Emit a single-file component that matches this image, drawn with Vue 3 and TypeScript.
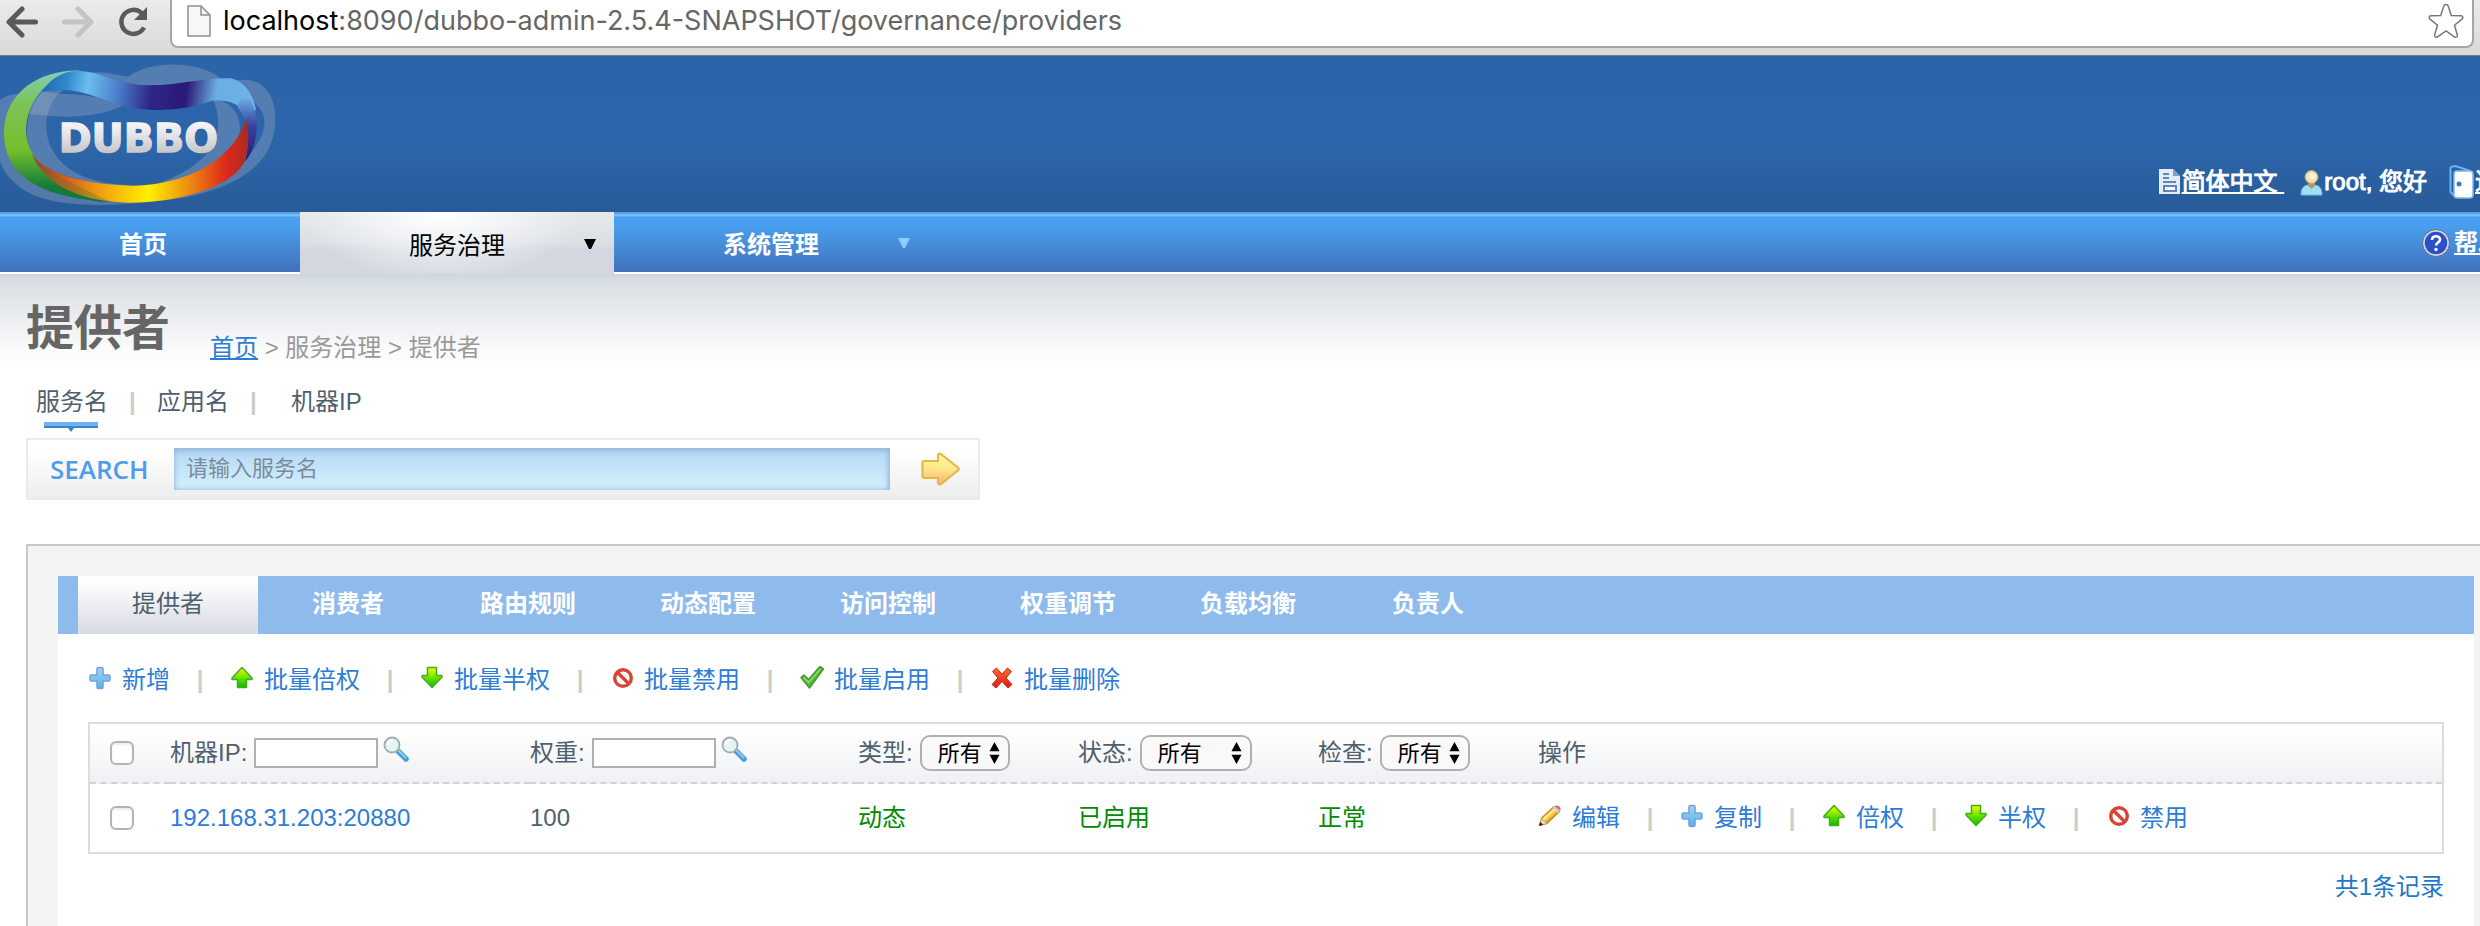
<script setup lang="ts">
import { ref } from 'vue'

interface Action {
  icon: string
  label: string
}

interface Provider {
  address: string
  weight: number
  type: string
  status: string
  check: string
}

const searchTabs = ['服务名', '应用名', '机器IP']
const tabs = ['提供者', '消费者', '路由规则', '动态配置', '访问控制', '权重调节', '负载均衡', '负责人']

const batchActions: Action[] = [
  { icon: 'plus', label: '新增' },
  { icon: 'up', label: '批量倍权' },
  { icon: 'down', label: '批量半权' },
  { icon: 'ban', label: '批量禁用' },
  { icon: 'tick', label: '批量启用' },
  { icon: 'cross', label: '批量删除' },
]

const rowActions: Action[] = [
  { icon: 'pencil', label: '编辑' },
  { icon: 'plus', label: '复制' },
  { icon: 'up', label: '倍权' },
  { icon: 'down', label: '半权' },
  { icon: 'ban', label: '禁用' },
]

const filters = [
  { id: 'type', label: '类型:', options: ['所有', '动态', '静态'] },
  { id: 'status', label: '状态:', options: ['所有', '已启用', '已禁用'] },
  { id: 'check', label: '检查:', options: ['所有', '正常'] },
]

const providers: Provider[] = [
  { address: '192.168.31.203:20880', weight: 100, type: '动态', status: '已启用', check: '正常' },
]

const keyword = ref('')
const ipFilter = ref('')
const weightFilter = ref('')
</script>

<template>
  <div class="page">
    <svg class="sprite" width="0" height="0" aria-hidden="true">
      <defs>
        <linearGradient id="g-green" x1="0" y1="0" x2="0" y2="1">
          <stop offset="0" stop-color="#f2ff00" />
          <stop offset="0.55" stop-color="#5fe000" />
          <stop offset="1" stop-color="#12b800" />
        </linearGradient>
        <linearGradient id="g-plus" x1="0" y1="0" x2="0" y2="1">
          <stop offset="0" stop-color="#9fd6f6" />
          <stop offset="1" stop-color="#4fb4ee" />
        </linearGradient>
        <linearGradient id="g-red" x1="0" y1="0" x2="0" y2="1">
          <stop offset="0" stop-color="#ff6a3a" />
          <stop offset="1" stop-color="#d91c0c" />
        </linearGradient>
        <linearGradient id="g-arrow" x1="0" y1="0" x2="0" y2="1">
          <stop offset="0" stop-color="#ffff9c" />
          <stop offset="0.5" stop-color="#ffe68a" />
          <stop offset="1" stop-color="#ffae6e" />
        </linearGradient>
      </defs>
      <symbol id="i-plus" viewBox="0 0 24 28">
        <path d="M10.500 1.500h3a1.500 1.500 0 0 1 1.500 1.500v6h5.500a1.500 1.500 0 0 1 1.500 1.500v3a1.500 1.500 0 0 1-1.500 1.500h-5.500v6a1.500 1.500 0 0 1-1.500 1.500h-3a1.500 1.500 0 0 1-1.500-1.500v-6H3.500a1.500 1.500 0 0 1-1.500-1.500v-3A1.500 1.500 0 0 1 3.500 9h5.500V3A1.500 1.500 0 0 1 10.500 1.500z" fill="url(#g-plus)" stroke="#7d9fd6" stroke-width="1.600" />
      </symbol>
      <symbol id="i-up" viewBox="0 0 24 28">
        <path d="M12 1.500L22 12v1.500h-5.500v8h-9v-8H2V12z" fill="url(#g-green)" stroke="#3fae1c" stroke-width="1.500" stroke-linejoin="round" />
      </symbol>
      <symbol id="i-down" viewBox="0 0 24 28">
        <path d="M12 21.500L22 11V9.500h-5.500v-8h-9v8H2V11z" fill="url(#g-green)" stroke="#3fae1c" stroke-width="1.500" stroke-linejoin="round" />
      </symbol>
      <symbol id="i-ban" viewBox="0 0 24 28">
        <circle cx="13" cy="12" r="8.300" fill="#fff" stroke="#d64535" stroke-width="3.400" />
        <path d="M7.500 6.500l11 11" stroke="#d64535" stroke-width="3.400" />
      </symbol>
      <symbol id="i-tick" viewBox="0 0 24 28">
        <path d="M1 11.500l3-2.500 4.500 4.500L20 .5l3.500 2.500L9.500 22z" fill="#5cb83c" stroke="#3f9a2a" stroke-width="1.500" stroke-linejoin="round" />
        <path d="M3.500 11.500l5 5L20.500 3" fill="none" stroke="#8fdc6a" stroke-width="1.500" />
      </symbol>
      <symbol id="i-cross" viewBox="0 0 24 28">
        <path d="M6.500 2L12 8l5.500-6L21.500 5.500 16 12l6 6.500-4 3.500-6-6.500L6 22l-4-3.500L8 12 2.500 5.500z" fill="url(#g-red)" stroke="#c4281a" stroke-width="1" stroke-linejoin="round" />
      </symbol>
      <symbol id="i-pencil" viewBox="0 0 24 28">
        <path d="M1.500 21.500L3.500 14 16 2.500l5.500 5L9 19.500z" fill="#f5c842" stroke="#b98a1e" stroke-width="1.200" />
        <path d="M5.500 15.500L17 5" stroke="#ffeb9a" stroke-width="2" />
        <path d="M8 18.500l11.500-10" stroke="#d99e1c" stroke-width="1.500" />
        <path d="M1.500 21.500l2-7 5.500 5z" fill="#f6d5b4" stroke="#c99a6a" stroke-width="0.800" />
        <path d="M1 22l1.200-4 3 2.800z" fill="#222" />
        <path d="M14.500 4L17 1.800l5 4.800-2.200 2.300z" fill="#c9d3d8" />
        <path d="M16.500 2.300C18.500.2 24 2.500 22.300 6.800z" fill="#e5646a" />
      </symbol>
      <symbol id="i-magnifier" viewBox="0 0 26 26">
        <path d="M15.500 15.500l7.500 7.500" stroke="#4e9ed8" stroke-width="5.500" stroke-linecap="round" />
        <path d="M15.500 14.500l7 7" stroke="#8cccf4" stroke-width="2" stroke-linecap="round" />
        <circle cx="9" cy="9" r="7.500" fill="#e4f3f3" stroke="#a4adad" stroke-width="1.800" />
        <path d="M4.500 9a4.500 4.500 0 0 1 5-4.500" fill="none" stroke="#fff" stroke-width="2" />
      </symbol>
      <symbol id="i-updown" viewBox="0 0 12 24">
        <path d="M6 0l5.500 10H.5zM6 24l5.500-10H.5z" fill="#000" />
      </symbol>
    </svg>

    <div class="browser">
      <div class="browser-buttons">
        <button type="button" aria-label="后退">
          <svg width="32" height="32" viewBox="0 0 32 32"><path d="M29.500 16H4M16 3L3 16l13 13" fill="none" stroke="#5a5a5a" stroke-width="5" stroke-linecap="round" stroke-linejoin="round" /></svg>
        </button>
        <button type="button" aria-label="前进">
          <svg width="32" height="32" viewBox="0 0 32 32"><path d="M2.500 16H28M16 3l13 13-13 13" fill="none" stroke="#c4c4c4" stroke-width="5" stroke-linecap="round" stroke-linejoin="round" /></svg>
        </button>
        <button type="button" aria-label="刷新">
          <svg width="32" height="32" viewBox="0 0 32 32"><path d="M26 21.500A12 12 0 1 1 24 7.500" fill="none" stroke="#5a5a5a" stroke-width="4.500" /><path d="M29 1v13H16z" fill="#5a5a5a" /></svg>
        </button>
      </div>
      <div class="address">
        <svg width="24" height="32" viewBox="0 0 24 32"><path d="M1 1h13l9 9v21H1z" fill="#f8f8f8" stroke="#8f8f8f" stroke-width="1.500" /><path d="M14 1v9h9" fill="none" stroke="#8f8f8f" stroke-width="1.500" /></svg>
        <span class="url"><span class="host">localhost</span>:8090/dubbo-admin-2.5.4-SNAPSHOT/governance/providers</span>
        <svg class="star" width="36" height="36" viewBox="0 0 36 36"><path d="M18 1.500c1 0 2 .8 2.300 1.800l3 9.200 9.700.2c2 .2 2.500 2.300 1 3.500l-7.500 6 2.800 9.600c.5 2-1.300 3.200-2.900 2L18 28l-8.400 5.800c-1.600 1.200-3.400 0-2.900-2l2.800-9.600-7.500-6c-1.500-1.200-1-3.300 1-3.500l9.700-.2 3-9.200C16 2.300 17 1.500 18 1.500z" fill="#fff" stroke="#777" stroke-width="1.500" /></svg>
      </div>
    </div>

    <header class="banner">
      <svg class="logo" width="290" height="156" viewBox="0 18 870 468" role="img" aria-label="DUBBO">
        <defs>
          <linearGradient id="l-green" x1="0" y1="0" x2="0" y2="1">
            <stop offset="0" stop-color="#7fd0b8" />
            <stop offset="0.25" stop-color="#7cc357" />
            <stop offset="0.6" stop-color="#76bf2c" />
            <stop offset="0.88" stop-color="#177c38" />
            <stop offset="1" stop-color="#12763a" />
          </linearGradient>
          <linearGradient id="l-blue" gradientUnits="userSpaceOnUse" x1="125" y1="80" x2="760" y2="170">
            <stop offset="0" stop-color="#1a68ae" />
            <stop offset="0.12" stop-color="#2f8acb" />
            <stop offset="0.22" stop-color="#6cbdf0" />
            <stop offset="0.36" stop-color="#4a7fcc" />
            <stop offset="0.52" stop-color="#2f2585" />
            <stop offset="0.68" stop-color="#2b1976" />
            <stop offset="0.82" stop-color="#6aaee3" />
            <stop offset="1" stop-color="#6db3e8" />
          </linearGradient>
          <linearGradient id="l-tail" gradientUnits="userSpaceOnUse" x1="0" y1="140" x2="0" y2="330">
            <stop offset="0" stop-color="#6db3e8" />
            <stop offset="0.45" stop-color="#3a449c" />
            <stop offset="1" stop-color="#2a1a78" />
          </linearGradient>
          <linearGradient id="l-fire" gradientUnits="userSpaceOnUse" x1="95" y1="0" x2="745" y2="0">
            <stop offset="0" stop-color="#b9361f" />
            <stop offset="0.18" stop-color="#dd661a" />
            <stop offset="0.32" stop-color="#f1a010" />
            <stop offset="0.54" stop-color="#fff000" />
            <stop offset="0.72" stop-color="#ec8f12" />
            <stop offset="0.9" stop-color="#dc281c" />
            <stop offset="1" stop-color="#a92c22" />
          </linearGradient>
          <linearGradient id="l-text" x1="0" y1="0" x2="0" y2="1">
            <stop offset="0" stop-color="#ffffff" />
            <stop offset="0.4" stop-color="#e8e8ea" />
            <stop offset="1" stop-color="#b9b9bc" />
          </linearGradient>
        </defs>
        <g fill="#b4b9c4" fill-opacity="0.3">
          <path d="M385 80C450 30 600 30 665 88L690 100C600 85 540 108 440 106C380 103 330 85 270 68C320 62 350 78 385 80z" />
          <path d="M0 150C25 128 70 130 130 122C170 140 260 120 370 166C280 212 150 202 85 190C70 240 75 290 98 320C110 380 190 440 300 455C520 460 680 420 745 320C800 250 810 200 765 160L705 92C790 75 830 140 826 215C820 330 740 400 560 442C380 470 180 480 80 425C30 395 10 360 0 335z" />
          <path d="M130 122L190 120C120 170 120 290 200 350C250 390 330 405 400 405C270 410 140 370 98 318C70 260 75 180 130 122z" />
          <path d="M640 150C690 150 722 190 720 240C715 310 600 385 470 402C560 370 700 300 640 150z" />
        </g>
        <path d="M240 62C130 58 12 120 12 250C12 370 110 445 330 455C190 420 78 340 78 240C80 170 120 85 240 62z" fill="url(#l-green)" />
        <path d="M125 128C150 82 195 62 235 62C310 66 350 104 440 106C530 108 610 82 690 85C730 92 760 130 768 180L735 190C720 160 680 148 637 152C580 172 520 180 460 180C340 176 275 120 190 120C160 120 140 122 125 128z" fill="url(#l-blue)" />
        <path d="M730 122C765 160 772 200 770 235C768 280 755 310 736 334C750 270 742 210 712 170z" fill="url(#l-tail)" />
        <path d="M95 310C130 370 250 405 400 407C560 405 705 325 738 206C750 260 745 310 730 342C680 420 520 458 390 458C230 455 130 400 95 310z" fill="url(#l-fire)" />
        <path d="M95 310C120 360 200 390 330 455C230 452 130 400 95 310z" fill="#2d7a35" fill-opacity="0.3" />
        <text x="176" y="305" font-family="DejaVu Sans" font-weight="700" font-size="119" fill="url(#l-text)" stroke="url(#l-text)" stroke-width="4">DUBBO</text>
      </svg>
      <div class="user-links">
        <a href="#" class="lang"><svg width="24" height="28" viewBox="0 0 24 28"><path d="M1 1h14l7 7v18H1z" fill="#e4ecf8" /><path d="M15 1v7h7z" fill="#7f9fd4" /><path d="M5 6h6M5 10h6M5 14h13" stroke="#5c87b8" stroke-width="2" /><path d="M6 18h12v5H6z" fill="#fff" stroke="#5c87b8" stroke-width="2" /></svg><span>简体中文&nbsp;</span></a>
        <span class="user"><svg width="24" height="28" viewBox="0 0 24 28"><path d="M1 27c0-7 3-10 8-10h5c5 0 8 3 8 10z" fill="#9fe0f7" stroke="#6fb8e4" /><path d="M8 13h7v5l-3.500 3L8 18z" fill="#b99866" /><circle cx="11.500" cy="9" r="6.500" fill="#f3e2b0" stroke="#b79f70" /><circle cx="12.500" cy="8" r="3" fill="#fff6d8" /></svg>root, 您好</span>
        <a href="#" class="logout"><svg width="26" height="36" viewBox="0 0 26 36"><path d="M1.500 3l5-1 15 5v4M1.500 3v25l4 4" fill="none" stroke="#6fb1f2" stroke-width="2" /><rect x="5" y="7" width="19" height="27" rx="3" fill="#fff" stroke="#7fb8f0" stroke-width="1.500" /><circle cx="10" cy="20" r="2.500" fill="#3f78b8" /></svg><span>退出</span></a>
      </div>
    </header>

    <nav class="menu" aria-label="主菜单">
      <a href="#" class="menu-home">首页</a>
      <a href="#" class="menu-item current">服务治理<svg width="12" height="10" viewBox="0 0 12 10"><path d="M0 0h12L7 10H5z" fill="#000" /></svg></a>
      <a href="#" class="menu-item">系统管理<svg width="12" height="10" viewBox="0 0 12 10"><path d="M0 0h12L7 10H5z" fill="#8fcbff" /></svg></a>
      <a href="#" class="help"><svg width="28" height="28" viewBox="0 0 28 28"><circle cx="14" cy="14" r="12.300" fill="#2b4fc6" stroke="#d5d8e0" stroke-width="2.200" /><circle cx="14" cy="14" r="13.500" fill="none" stroke="#5f6f8c" /><path d="M10 11c0-5 8-5 8-.5 0 3-4 3-4 6" fill="none" stroke="#fff" stroke-width="2.600" /><circle cx="14" cy="20.500" r="1.700" fill="#fff" /></svg><span>帮助</span></a>
    </nav>

    <main>
      <div class="heading">
        <h1>提供者</h1>
        <p class="crumbs"><a href="#">首页</a> &gt; 服务治理 &gt; 提供者</p>
      </div>

      <div class="search-tabs">
        <a v-for="(tab, i) in searchTabs" :key="tab" href="#" :class="{ on: i === 0 }">{{ tab }}<svg v-if="i === 0" width="54" height="10" viewBox="0 0 54 10"><path d="M0 0h54v4H0z" fill="#6db4f4" /><path d="M0 4h54v2H30l-3 4-3-4H0z" fill="#3f83c0" /></svg></a>
      </div>

      <form class="search" @submit.prevent>
        <label for="keyword">SEARCH</label>
        <input id="keyword" v-model="keyword" type="text" placeholder="请输入服务名">
        <button type="submit" aria-label="搜索">
          <svg width="40" height="34" viewBox="0 0 40 34"><path d="M3 9h14V3.500c0-2 1.500-2.500 3-1.300L37 15.500c1 .8 1 2.200 0 3L20 32c-1.500 1-3 .5-3-1.500V26H3c-1 0-1.500-.5-1.500-1.500v-14C1.500 9.500 2 9 3 9z" fill="url(#g-arrow)" stroke="#e3b94c" stroke-width="2.200" /></svg>
        </button>
      </form>

      <section class="panel">
        <nav class="tabs" aria-label="服务治理">
          <a v-for="(tab, i) in tabs" :key="tab" href="#" :class="{ on: i === 0 }">{{ tab }}</a>
        </nav>
        <div class="content">
          <div class="actions toolbar">
            <template v-for="(a, i) in batchActions" :key="a.label">
              <span v-if="i" class="bar">|</span>
              <a href="#"><svg width="24" height="28"><use :href="'#i-' + a.icon" /></svg>{{ a.label }}</a>
            </template>
          </div>

          <table>
            <colgroup>
              <col class="c-box"><col class="c-ip"><col class="c-weight"><col class="c-type"><col class="c-status"><col class="c-check"><col>
            </colgroup>
            <thead>
              <tr>
                <th><input type="checkbox" aria-label="全选"></th>
                <th>
                  <div class="filter">
                    <label for="ip">机器IP:</label>
                    <input id="ip" v-model="ipFilter" type="text">
                    <button type="button" aria-label="按机器IP查找"><svg width="26" height="26"><use href="#i-magnifier" /></svg></button>
                  </div>
                </th>
                <th>
                  <div class="filter">
                    <label for="weight">权重:</label>
                    <input id="weight" v-model="weightFilter" type="text">
                    <button type="button" aria-label="按权重查找"><svg width="26" height="26"><use href="#i-magnifier" /></svg></button>
                  </div>
                </th>
                <th v-for="f in filters" :key="f.id">
                  <div class="filter">
                    <label :for="f.id">{{ f.label }}</label>
                    <span class="picker" :class="f.id">
                      <select :id="f.id"><option v-for="o in f.options" :key="o">{{ o }}</option></select>
                      <svg width="11" height="24"><use href="#i-updown" /></svg>
                    </span>
                  </div>
                </th>
                <th>操作</th>
              </tr>
            </thead>
            <tbody>
              <tr v-for="p in providers" :key="p.address">
                <td><input type="checkbox" :aria-label="p.address"></td>
                <td><a href="#">{{ p.address }}</a></td>
                <td>{{ p.weight }}</td>
                <td class="ok">{{ p.type }}</td>
                <td class="ok">{{ p.status }}</td>
                <td class="ok">{{ p.check }}</td>
                <td>
                  <div class="actions">
                    <template v-for="(a, i) in rowActions" :key="a.label">
                      <span v-if="i" class="bar">|</span>
                      <a href="#"><svg width="24" height="28"><use :href="'#i-' + a.icon" /></svg>{{ a.label }}</a>
                    </template>
                  </div>
                </td>
              </tr>
            </tbody>
          </table>
          <p class="total">共{{ providers.length }}条记录</p>
        </div>
      </section>
    </main>
  </div>
</template>

<style>
body {
  margin: 0;
}
</style>

<style scoped>
.page {
  display: flex;
  flex-direction: column;
  min-height: 100vh;
  overflow: hidden;
  background: #fff;
  color: #4f5f6f;
  font-family: "Liberation Sans", "Noto Sans CJK SC", sans-serif;
  font-size: 24px;
  line-height: 36px;
}

.page *,
.page {
  box-sizing: border-box;
}

.sprite {
  position: absolute;
}

a {
  color: #2d7cd6;
  text-decoration: none;
}

button {
  display: flex;
  padding: 0;
  border: 0;
  background: none;
}

svg {
  flex: none;
}

.browser {
  display: flex;
  height: 56px;
  padding-right: 6px;
  border-bottom: 1px solid #7a7a7a;
  background: linear-gradient(#ebebeb, #d9d9d9);
}

.browser-buttons {
  display: flex;
  gap: 24px;
  width: 170px;
  height: 44px;
  padding-left: 6px;
  align-items: center;
}

.address {
  display: flex;
  flex: 1;
  align-items: center;
  height: 48px;
  padding: 0 8px 4px 15px;
  border: 2px solid #a6a6a6;
  border-top: 0;
  border-radius: 0 0 8px 8px;
  background: #fff;
}

.url {
  flex: 1;
  margin-left: 12px;
  color: #666;
  font-family: Inter, Roboto, sans-serif;
  font-size: 27px;
}

.host {
  color: #000;
}

.banner {
  display: flex;
  align-items: flex-end;
  justify-content: space-between;
  background: linear-gradient(#2c64a9 0%, #2c65a9 60%, #285a98 100%);
}

.logo {
  display: block;
}

.user-links {
  display: flex;
  margin: 0 -43px 10px 0;
  color: #fff;
  -webkit-text-stroke: 1px #fff;
}

.user-links a,
.user-links .user {
  display: flex;
  align-items: center;
  height: 40px;
  color: #fff;
}

.user-links a span,
.help span {
  text-decoration: underline;
}

.lang {
  margin-right: 16px;
}

.user {
  margin-right: 22px;
}

.menu {
  display: flex;
  height: 62px;
  border-bottom: 2px solid #fff;
  background: linear-gradient(#4fa2f0 0, #4fa2f0 2px, #7dbbf6 2px, #7dbbf6 4px, #4aa1f1 5px, #489cec 16px, #4272ba 100%);
}

.menu a {
  display: flex;
  align-items: center;
  color: #fff;
  font-weight: 700;
}

.menu-home {
  width: 300px;
  padding: 6px 0 0 119px;
}

.menu-item {
  width: 314px;
  padding: 6px 18px 0 109px;
  justify-content: space-between;
}

.menu-item svg {
  margin-bottom: 4px;
}

.menu .current {
  height: 62px;
  background: radial-gradient(ellipse 140px 70px at 45% 0, #fff, rgba(255, 255, 255, 0)), linear-gradient(#e6e9ec, #dbe0e5 50%, #d3d8e0 60%, #d3d8e0);
  color: #000;
  font-weight: 400;
}

.menu .help {
  gap: 4px;
  margin: 2px -22px 0 auto;
}

main {
  display: flex;
  flex: 1;
  flex-direction: column;
  padding-left: 26px;
  background: linear-gradient(#cfd5de 0, #dbe0e5 10px, #e4e7eb 30px, #eef0f3 50px, #fafbfb 76px, #fff 94px);
}

.heading {
  display: flex;
  gap: 40px;
  margin-top: 25px;
}

h1 {
  margin: 0;
  color: #666;
  font-size: 48px;
  font-weight: 700;
  line-height: 60px;
}

.crumbs {
  margin: 31px 0 0;
  color: #999;
}

.crumbs a {
  text-decoration: underline;
}

.search-tabs {
  display: flex;
  height: 54px;
  margin-top: 18px;
  padding-left: 10px;
}

.search-tabs a {
  display: flex;
  flex-direction: column;
  height: 36px;
  color: #4f5f6f;
}

.search-tabs a + a {
  display: flex;
  flex-direction: row;
}

.search-tabs a + a::before {
  content: "|";
  width: 7px;
  margin: 0 21px;
  color: #ccc;
  font-weight: 700;
}

.search-tabs a:last-child::before {
  margin-right: 34px;
}

.search-tabs svg {
  display: block;
  margin: 2px 0 0 8px;
}

.search {
  display: flex;
  align-items: center;
  width: 954px;
  height: 62px;
  border: 2px solid #e8ecf0;
  background: linear-gradient(#fff 20%, #ededed);
}

.search label {
  width: 146px;
  padding-left: 22px;
  color: #4f9cec;
  font-family: "Open Sans", sans-serif;
  font-size: 26px;
  font-weight: 600;
}

.search input {
  width: 716px;
  height: 42px;
  padding: 0 12px;
  border: 0;
  background: linear-gradient(#b4d8f5, #cdecfc 80%);
  box-shadow: inset 0 2px 6px #8fb4dc, inset -2px 0 4px #a9c8dc;
  color: #4f5f6f;
  font: 22px "Liberation Sans", "Noto Sans CJK SC", sans-serif;
}

.search input::placeholder {
  color: #7d8b99;
}

.search button {
  margin-left: 31px;
}

.panel {
  display: flex;
  flex: 1;
  flex-direction: column;
  margin-top: 44px;
  padding: 30px 6px 0 30px;
  border: 2px solid #c8c8c8;
  border-width: 2px 0 0 2px;
  background: #f3f5f4;
}

.tabs {
  display: flex;
  height: 58px;
  padding-left: 20px;
  background: #8ebbec;
}

.tabs a {
  width: 180px;
  color: #fff;
  font-weight: 700;
  line-height: 56px;
  text-align: center;
}

.tabs .on {
  background: linear-gradient(#fff 10%, #d5d9e1);
  color: #4f5f6f;
  font-weight: 400;
}

.content {
  flex: 1;
  padding: 0 30px;
  background: #fff;
}

.actions {
  display: flex;
  align-items: center;
}

.actions a {
  display: flex;
  align-items: center;
  gap: 10px;
}

.bar {
  width: 8px;
  margin: 0 26px;
  color: #ccc;
  font-weight: 700;
  text-align: center;
}

.toolbar {
  height: 88px;
  padding-top: 4px;
}

table {
  width: 100%;
  border: 2px solid #dcdcdc;
  border-spacing: 0;
  table-layout: fixed;
}

.c-box {
  width: 80px;
}

.c-ip {
  width: 360px;
}

.c-weight {
  width: 328px;
}

.c-type,
.c-check {
  width: 220px;
}

.c-status {
  width: 240px;
}

th,
td {
  height: 60px;
  padding: 0;
  font-weight: 400;
  text-align: left;
}

td {
  height: 68px;
}

thead {
  background: linear-gradient(#fff 10%, #eff0f3);
}

th {
  border-bottom: 2px dashed #d2d2d4;
}

.filter {
  display: flex;
  align-items: center;
  white-space: nowrap;
}

.filter input {
  width: 124px;
  height: 30px;
  margin-left: 7px;
  padding: 0 4px;
  border: 2px solid #b0b0b0;
  background: #fff;
  font-size: 22px;
}

.filter button {
  height: 34px;
  margin-left: 5px;
}

.filter button svg {
  align-self: flex-start;
}

input[type="checkbox"] {
  display: block;
  width: 24px;
  height: 24px;
  margin: 0 0 0 20px;
  border: 2px solid #b4b4b4;
  border-radius: 6px;
  background: #fff;
  box-shadow: inset 0 2px 2px #eee;
  appearance: none;
}

.picker {
  display: grid;
  align-items: center;
  width: 90px;
  margin-left: 7px;
}

.picker.status {
  width: 112px;
}

.picker select,
.picker svg {
  grid-area: 1 / 1;
}

.picker svg {
  margin-right: 10px;
  justify-self: end;
  pointer-events: none;
}

.picker select {
  width: 100%;
  height: 36px;
  padding: 0 0 0 16px;
  border: 2px solid #b0b0b0;
  border-radius: 10px;
  background: #f9f9f9;
  color: #000;
  font: 22px "Liberation Sans", "Noto Sans CJK SC", sans-serif;
  appearance: none;
}

.ok {
  color: #008a00;
}

.total {
  margin: 15px 0 0;
  color: #2377c8;
  text-align: right;
}
</style>
